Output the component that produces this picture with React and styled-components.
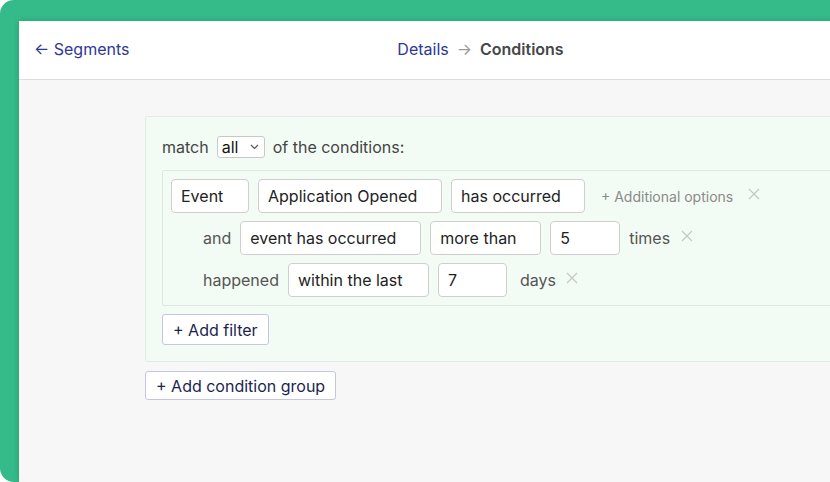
import React from "react";
import styled, { createGlobalStyle } from "styled-components";

const GlobalStyle = createGlobalStyle`
  html, body {
    margin: 0;
    padding: 0;
    background: #ffffff;
    font-family: Inter, "Noto Sans", sans-serif;
  }
`;

const Backdrop = styled.div`
  width: 980px;
  height: 482px;
  background: #35bb89;
  border-radius: 14px 0 0 14px;
  padding: 21px 0 0 19px;
  box-sizing: border-box;
  overflow: hidden;
`;

const Frame = styled.div`
  width: 923px;
  height: 100%;
  background: #f7f7f7;
  border-top-left-radius: 3px;
  box-shadow: 0 0 6px rgba(0, 0, 0, 0.18);
  display: flex;
  flex-direction: column;
`;

const Header = styled.header`
  height: 56px;
  background: #ffffff;
  border-bottom: 1px solid #dddddd;
  display: grid;
  grid-template-columns: 1fr auto 1fr;
  align-items: center;
  padding: 0 15px 2px;
  font-size: 16px;
`;

const Link = styled.a`
  color: #2e3796;
  text-decoration: none;
`;

const Arrow = styled.span`
  color: #999;
  margin: 0 8px;
`;

const Current = styled.span`
  color: #474747;
  font-weight: 600;
`;

const Body = styled.main`
  padding: 36px 0 0 126px;
`;

const Group = styled.section`
  width: 760px;
  background: #f3fcf4;
  border: 1px solid #e3ece4;
  border-radius: 2px;
  padding: 19px 16px 16px;
  box-sizing: border-box;
`;

const MatchRow = styled.div`
  display: flex;
  align-items: center;
  gap: 8px;
  color: #444;
  font-size: 16px;
  height: 22px;
`;

const Select = styled.div`
  height: 22px;
  width: 48px;
  box-sizing: border-box;
  border: 1px solid #c8c8c8;
  border-radius: 3px;
  background: #fff;
  display: flex;
  align-items: center;
  justify-content: space-between;
  padding: 0 5px 0 4px;
  color: #111;
`;

const FilterBox = styled.div`
  margin-top: 12px;
  border: 1px solid #dfe8e0;
  border-radius: 2px;
  padding: 8px;
  display: flex;
  flex-direction: column;
  gap: 8px;
`;

const Row = styled.div`
  display: flex;
  align-items: center;
  gap: 9px;
  height: 34px;
  padding-left: ${(p) => p.$indent || 0}px;
`;

const Field = styled.div`
  width: ${(p) => p.$w}px;
  height: 34px;
  box-sizing: border-box;
  border: 1px solid #cfcfcf;
  border-radius: 4px;
  background: #fff;
  display: flex;
  align-items: center;
  padding-left: 9px;
  font-size: 16px;
  color: #222;
`;

const Label = styled.span`
  color: #555;
  font-size: 16px;
  margin-left: ${(p) => p.$ml || 0}px;
`;

const Options = styled.span`
  color: #8a8a8a;
  font-size: 14px;
  margin-left: 7px;
`;

const Remove = styled.svg`
  align-self: flex-start;
  margin-top: 9px;
  margin-left: ${(p) => p.$ml || 2}px;
  flex: none;
`;

const Cross = ({ ml }) => (
  <Remove $ml={ml} width="12" height="12" viewBox="0 0 12 12">
    <path d="M1 1l10 10M11 1L1 11" stroke="#c6c6c6" strokeWidth="1.2" fill="none" />
  </Remove>
);

const Button = styled.button`
  font-family: inherit;
  font-size: 16px;
  color: #1c1f4f;
  background: #fff;
  border: 1px solid #c6c6e2;
  border-radius: 3px;
  height: ${(p) => p.$h}px;
  padding: 0 10px;
  cursor: pointer;
`;

const AddFilter = styled(Button)`
  margin-top: 8px;
`;

const AddGroup = styled(Button)`
  margin-top: 9px;
`;

export default function App() {
  return (
    <>
      <GlobalStyle />
      <Backdrop>
        <Frame>
          <Header>
            <div>
              <Link href="#">← Segments</Link>
            </div>
            <div>
              <Link href="#">Details</Link>
              <Arrow>→</Arrow>
              <Current>Conditions</Current>
            </div>
            <div />
          </Header>
          <Body>
            <Group>
              <MatchRow>
                match
                <Select>
                  <span>all</span>
                  <svg width="9" height="6" viewBox="0 0 9 6">
                    <path d="M1 1l3.5 3.5L8 1" fill="none" stroke="#555" strokeWidth="1.2" />
                  </svg>
                </Select>
                of the conditions:
              </MatchRow>
              <FilterBox>
                <Row>
                  <Field $w={78}>Event</Field>
                  <Field $w={184}>Application Opened</Field>
                  <Field $w={134}>has occurred</Field>
                  <Options>+ Additional options</Options>
                  <Cross ml={6} />
                </Row>
                <Row $indent={32}>
                  <Label>and</Label>
                  <Field $w={181}>event has occurred</Field>
                  <Field $w={111}>more than</Field>
                  <Field $w={70}>5</Field>
                  <Label>times</Label>
                  <Cross />
                </Row>
                <Row $indent={32}>
                  <Label>happened</Label>
                  <Field $w={141}>within the last</Field>
                  <Field $w={69}>7</Field>
                  <Label $ml={4}>days</Label>
                  <Cross ml={1} />
                </Row>
              </FilterBox>
              <AddFilter $h={31}>+ Add filter</AddFilter>
            </Group>
            <AddGroup $h={29}>+ Add condition group</AddGroup>
          </Body>
        </Frame>
      </Backdrop>
    </>
  );
}
